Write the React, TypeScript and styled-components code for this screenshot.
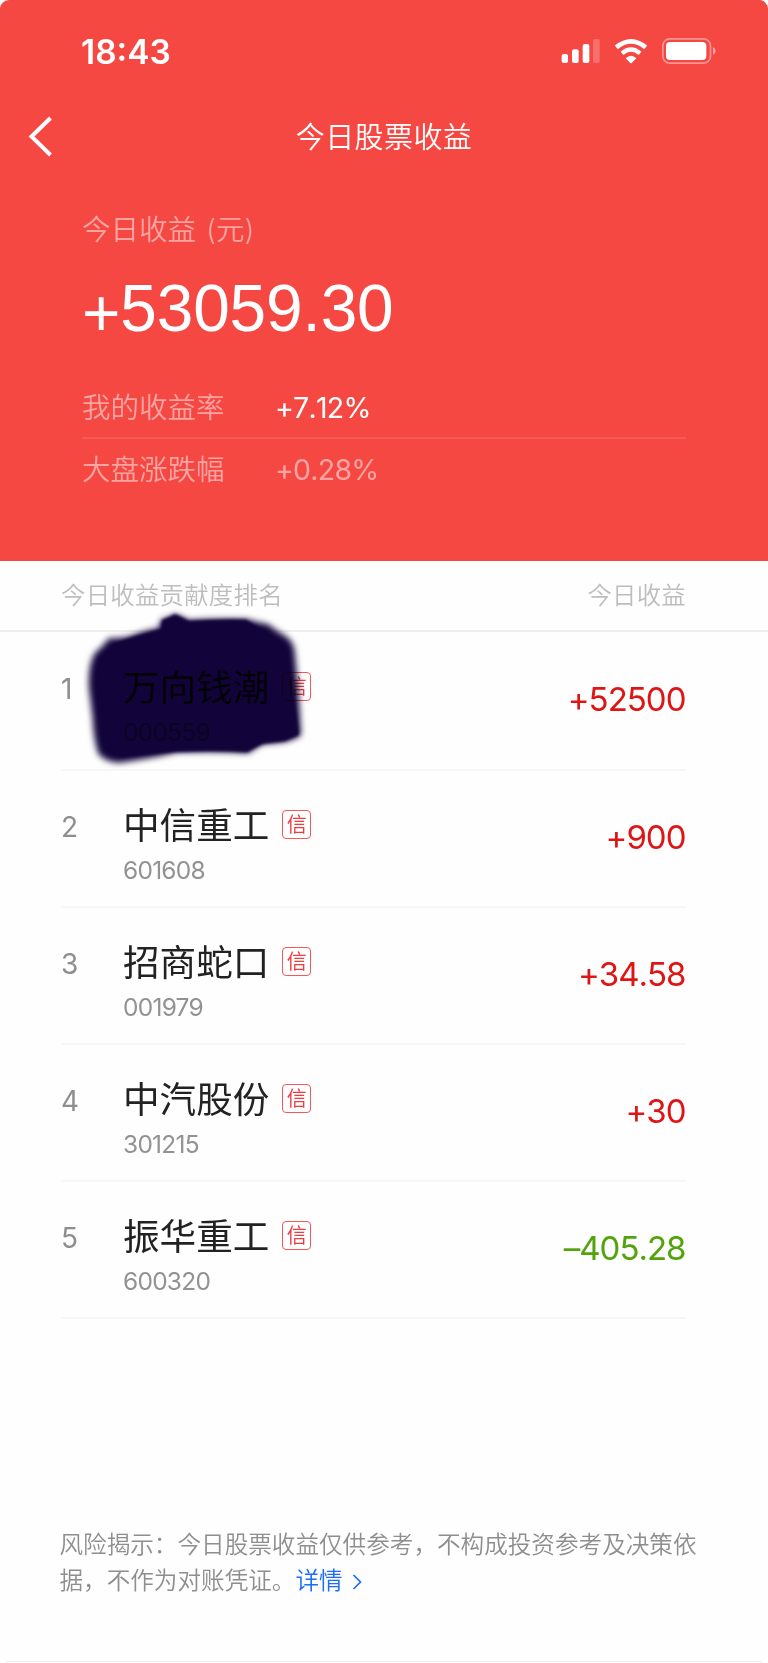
import React from "react";
import styled, { createGlobalStyle } from "styled-components";

const GlobalStyle = createGlobalStyle`
  * { box-sizing: border-box; }
  html, body { margin: 0; padding: 0; background: #fefefe; }
  body { font-family: "Inter", "Noto Sans CJK SC", sans-serif; font-weight: 350; }
`;

const Screen = styled.main`
  width: 768px;
  height: 1663px;
  display: flex;
  flex-direction: column;
  background: #fefefe;
`;

const Hero = styled.header`
  height: 561px;
  background: #f54843;
  color: #fff;
  border-radius: 9px 9px 0 0;
  display: flex;
  flex-direction: column;
`;

const StatusBar = styled.div`
  height: 102px;
  padding: 0 52px 0 81px;
  display: flex;
  align-items: center;
  justify-content: space-between;
`;

const Clock = styled.span`
  padding-top: 1px;
  font-size: 33.5px;
  font-weight: 600;
  line-height: 40px;
`;

const StatusIcons = styled.svg`
  width: 156px;
  height: 30px;
  display: block;
`;

const NavBar = styled.nav`
  height: 70px;
  display: grid;
  grid-template-columns: 120px 1fr 120px;
  align-items: center;
`;

const BackButton = styled.button`
  border: 0;
  background: none;
  padding: 0 0 0 26px;
  height: 70px;
  display: flex;
  align-items: center;
`;

const Title = styled.h1`
  margin: 0;
  padding-top: 1px;
  font-size: 29px;
  font-weight: 350;
  line-height: 40px;
  letter-spacing: 0.4px;
  text-align: center;
`;

const Summary = styled.section`
  padding: 38px 82px 0;
  display: flex;
  flex-direction: column;
`;

const SummaryLabel = styled.div`
  font-size: 28.5px;
  line-height: 40px;
  word-spacing: 2px;
  color: #fba4a2;
`;

const Total = styled.div`
  margin-top: 18px;
  font-family: "Liberation Sans", sans-serif;
  font-weight: 400;
  font-size: 65.8px;
  letter-spacing: -0.15px;
  line-height: 80px;
  height: 80px;
`;

const Sign = styled.span`
  line-height: 1;
  vertical-align: -5px;
`;

const Metrics = styled.div`
  margin-top: 28px;
`;

const Metric = styled.div<{ $dim?: boolean }>`
  height: 62px;
  padding-top: 1px;
  display: flex;
  align-items: center;
  font-size: 28.5px;
  line-height: 40px;
  color: ${(p) => (p.$dim ? "#fba4a2" : "#fff")};
  & + & { margin-top: -1px; border-top: 2px solid #f65a55; }
`;

const MetricName = styled.span`
  width: 193px;
  color: #fba4a2;
`;

const MetricValue = styled.span`
  font-kerning: none;
  font-weight: 380;
  letter-spacing: -0.75px;
`;

const TableHead = styled.div`
  height: 71px;
  padding: 0 82px 1px 61px;
  display: flex;
  align-items: center;
  justify-content: space-between;
  font-size: 24.4px;
  line-height: 34px;
  letter-spacing: 0.25px;
  color: #bdbdbd;
  border-bottom: 2px solid #efefef;
`;

const List = styled.ol`
  list-style: none;
  margin: 0;
  padding: 0 82px 0 61px;
`;

const Row = styled.li`
  position: relative;
  height: 137px;
  display: grid;
  grid-template-columns: 62px 1fr auto;
  border-bottom: 2px solid #f7f7f7;
  &:first-child { height: 139px; padding-top: 1px; }
`;

const Rank = styled.span`
  padding-top: 37.5px;
  font-size: 28px;
  font-weight: 380;
  line-height: 36px;
  color: #8e8e8e;
`;

const Stock = styled.div`
  padding-top: 30px;
`;

const NameLine = styled.div`
  height: 50px;
  display: flex;
  align-items: center;
  gap: 13px;
`;

const Name = styled.span`
  font-size: 36.6px;
  font-weight: 400;
  line-height: 50px;
  color: #222;
`;

const MarginBadge = styled.span`
  width: 29px;
  height: 29px;
  margin-top: -3px;
  border: 1.5px solid #f1585a;
  border-radius: 4px;
  display: flex;
  align-items: center;
  justify-content: center;
  font-size: 20px;
  font-weight: 400;
  line-height: 26px;
  color: #ea3f42;
`;

const Code = styled.div`
  margin-top: 3px;
  font-size: 24.5px;
  font-weight: 380;
  line-height: 32px;
  letter-spacing: -0.75px;
  color: #929292;
`;

const Amount = styled.span<{ $down?: boolean }>`
  padding: 44px 0.5px 0 0;
  font-size: 33px;
  font-weight: 380;
  line-height: 44px;
  letter-spacing: -1px;
  font-kerning: none;
  color: ${(p) => (p.$down ? "#52a30c" : "#df1414")};
`;

const Scribble = styled.svg`
  position: absolute;
  left: 18.5px;
  top: -27px;
  width: 240px;
  height: 165px;
  mix-blend-mode: multiply;
  pointer-events: none;
`;

const Disclaimer = styled.p`
  margin: 208px 0 0;
  padding: 0 60px 0 59.5px;
  font-size: 23.6px;
  line-height: 35.5px;
  color: #8e8e8e;
`;

const Details = styled.a`
  color: #1a6dfa;
  white-space: nowrap;
`;

const Chevron = styled.svg`
  width: 10px;
  height: 16px;
  margin-left: 9px;
  vertical-align: -1px;
`;

const BottomRule = styled.div`
  margin: auto 6px 1px;
  height: 1px;
  background: #ededed;
`;

const stocks = [
  { name: "万向钱潮", code: "000559", amount: "+52500" },
  { name: "中信重工", code: "601608", amount: "+900" },
  { name: "招商蛇口", code: "001979", amount: "+34.58" },
  { name: "中汽股份", code: "301215", amount: "+30" },
  { name: "振华重工", code: "600320", amount: "–405.28" },
];

const disclaimer = [
  "风险揭示\uFF1A今日股票收益仅供参考\uFF0C不构成投资参考及决策依",
  "据\uFF0C不作为对账凭证。",
];

function Marker() {
  return (
    <Scribble viewBox="120 150 720 495">
      <defs>
        <filter id="soft" x="-10%" y="-10%" width="120%" height="120%" colorInterpolationFilters="sRGB">
          <feGaussianBlur stdDeviation="10" />
        </filter>
        <filter id="crisp" x="-10%" y="-10%" width="120%" height="120%" colorInterpolationFilters="sRGB">
          <feGaussianBlur stdDeviation="5" />
        </filter>
      </defs>
      <path
        filter="url(#soft)"
        fill="#12043a"
        d="M361 196 Q385 190 405 178 Q425 186 446 196 Q535 190 622 193 Q650 203 685 208 Q705 226 740 245 Q766 265 766 310 L776 420 L783 540 Q765 552 735 560 L668 567 Q650 576 625 594 Q530 588 410 592 Q320 614 235 623 Q195 620 175 596 Q160 550 158 490 L147 400 Q143 330 165 294 Q190 274 207 250 Q250 250 275 242 Q320 225 359 219 Z"
      />
      <path
        filter="url(#crisp)"
        fill="#12043a"
        d="M366 195 Q388 188 405 178 Q425 186 446 198 Q535 192 618 194 L690 240 L740 300 L760 420 L776 540 L735 558 L668 566 Q650 575 622 591 Q530 586 410 590 L240 606 L200 570 L180 480 L170 390 L185 310 L225 265 L280 245 L364 222 Z"
      />
    </Scribble>
  );
}

export default function App() {
  return (
    <Screen>
      <GlobalStyle />
      <Hero>
        <StatusBar>
          <Clock>18:43</Clock>
          <StatusIcons viewBox="0 0 468 90" fill="#fff">
            <rect x="5" y="54" width="19" height="27" rx="6" />
            <rect x="36" y="40" width="20" height="41" rx="6" />
            <rect x="68" y="24" width="20" height="57" rx="6" />
            <rect x="99" y="9" width="20" height="72" rx="6" opacity=".22" />
            <g fill="none" stroke="#fff">
              <path d="M169 34 Q213 -2 257 34" strokeWidth="14" />
              <path d="M186 52 Q213 29 240 52" strokeWidth="13" />
            </g>
            <path d="M197 67 Q213 51 229 67 L216 80 Q213 83 210 80 Z" />
            <rect x="308.500" y="8.500" width="143" height="73" rx="21" fill="none" stroke="#fff" strokeWidth="5" opacity=".42" />
            <rect x="318" y="18" width="121" height="54" rx="12" />
            <path d="M459 33 Q467 38 467 45 Q467 52 459 57 Z" opacity=".5" />
          </StatusIcons>
        </StatusBar>
        <NavBar>
          <BackButton aria-label="返回">
            <svg width="30" height="44" viewBox="0 0 30 44" fill="none" stroke="#fff" strokeWidth="4">
              <path d="M24.500 3 L5.500 21.500 L24.500 40" />
            </svg>
          </BackButton>
          <Title>今日股票收益</Title>
        </NavBar>
        <Summary>
          <SummaryLabel>今日收益 (元)</SummaryLabel>
          <Total>
            <Sign>+</Sign>53059.30
          </Total>
          <Metrics>
            <Metric>
              <MetricName>我的收益率</MetricName>
              <MetricValue>+7.12%</MetricValue>
            </Metric>
            <Metric $dim>
              <MetricName>大盘涨跌幅</MetricName>
              <MetricValue>+0.28%</MetricValue>
            </Metric>
          </Metrics>
        </Summary>
      </Hero>
      <TableHead>
        <span>今日收益贡献度排名</span>
        <span>今日收益</span>
      </TableHead>
      <List>
        {stocks.map((s, i) => (
          <Row key={s.code}>
            <Rank>{i + 1}</Rank>
            <Stock>
              <NameLine>
                <Name>{s.name}</Name>
                <MarginBadge>信</MarginBadge>
              </NameLine>
              <Code>{s.code}</Code>
            </Stock>
            <Amount $down={s.amount.startsWith("–")}>{s.amount}</Amount>
            {i === 0 && <Marker />}
          </Row>
        ))}
      </List>
      <Disclaimer>
        {disclaimer[0]}
        <br />
        {disclaimer[1]}
        <Details>
          详情
          <Chevron viewBox="0 0 10 16" fill="none" stroke="currentColor" strokeWidth="1.700">
            <path d="M1.500 1 L8.500 8 L1.500 15" />
          </Chevron>
        </Details>
      </Disclaimer>
      <BottomRule />
    </Screen>
  );
}
